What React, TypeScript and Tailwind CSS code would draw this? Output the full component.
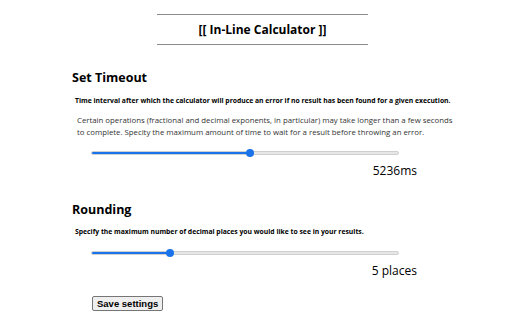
import React from "react";

function Slider({ pct }: { pct: number }) {
  return (
    <div className="relative ml-[19px] w-[308px] h-[10px] flex items-center">
      <div className="w-full h-[4px] rounded-full bg-[#e6e6e6] border border-[#cfcfcf] overflow-hidden">
        <div className="h-full bg-[#1a73e8]" style={{ width: `${pct}%` }} />
      </div>
      <div
        className="absolute top-[1px] w-[8px] h-[8px] rounded-full bg-[#1a73e8] -ml-[4px]"
        style={{ left: `${pct}%` }}
      />
    </div>
  );
}

export default function App() {
  return (
    <div
      className="w-[512px] h-[320px] bg-white text-black overflow-hidden"
      style={{ fontFamily: '"Open Sans", "Noto Sans", sans-serif' }}
    >
      <div className="flex flex-col items-center pt-[14px] pl-[13px]">
        <div className="w-[211px] border-t border-[#8a8a8a]" />
        <div className="h-[29px] flex items-center text-[12px] font-bold">[[ In-Line Calculator ]]</div>
        <div className="w-[211px] border-t border-[#8a8a8a]" />
      </div>
      <div className="pl-[72px] flex flex-col">
        <div className="mt-[23px] h-[20px] flex items-center text-[12.5px] font-bold">Set Timeout</div>
        <div className="mt-[8px] ml-[3px] h-[10px] flex items-center text-[6.8px] font-bold whitespace-nowrap">
          Time interval after which the calculator will produce an error if no result has been found for a given execution.
        </div>
        <div className="mt-[8px] ml-[5px] text-[7.8px] leading-[12px] text-[#333] w-[382px]">
          Certain operations (fractional and decimal exponents, in particular) may take longer than a few seconds to complete. Specity the maximum amount of time to wait for a result before throwing an error.
        </div>
        <div className="mt-[10px]">
          <Slider pct={51.6} />
        </div>
        <div className="w-[345px] flex justify-end mt-[6px] h-[14px] items-center text-[12px]">5236ms</div>
        <div className="mt-[22px] h-[20px] flex items-center text-[12.5px] font-bold">Rounding</div>
        <div className="mt-[7px] ml-[3px] h-[10px] flex items-center text-[6.8px] font-bold whitespace-nowrap">
          Specify the maximum number of decimal places you would like to see in your results.
        </div>
        <div className="mt-[11px]">
          <Slider pct={25.6} />
        </div>
        <div className="w-[345px] flex justify-end mt-[6px] h-[14px] items-center text-[12px]">5 places</div>
        <div className="mt-[11px] ml-[20px]">
          <button
            className="px-[4px] h-[15px] leading-[13px] text-[9.5px] font-bold bg-[#efefef] border border-[#767676] rounded-[2px]"
            style={{ fontFamily: '"Liberation Sans", Arial, sans-serif' }}
          >
            Save settings
          </button>
        </div>
      </div>
    </div>
  );
}
